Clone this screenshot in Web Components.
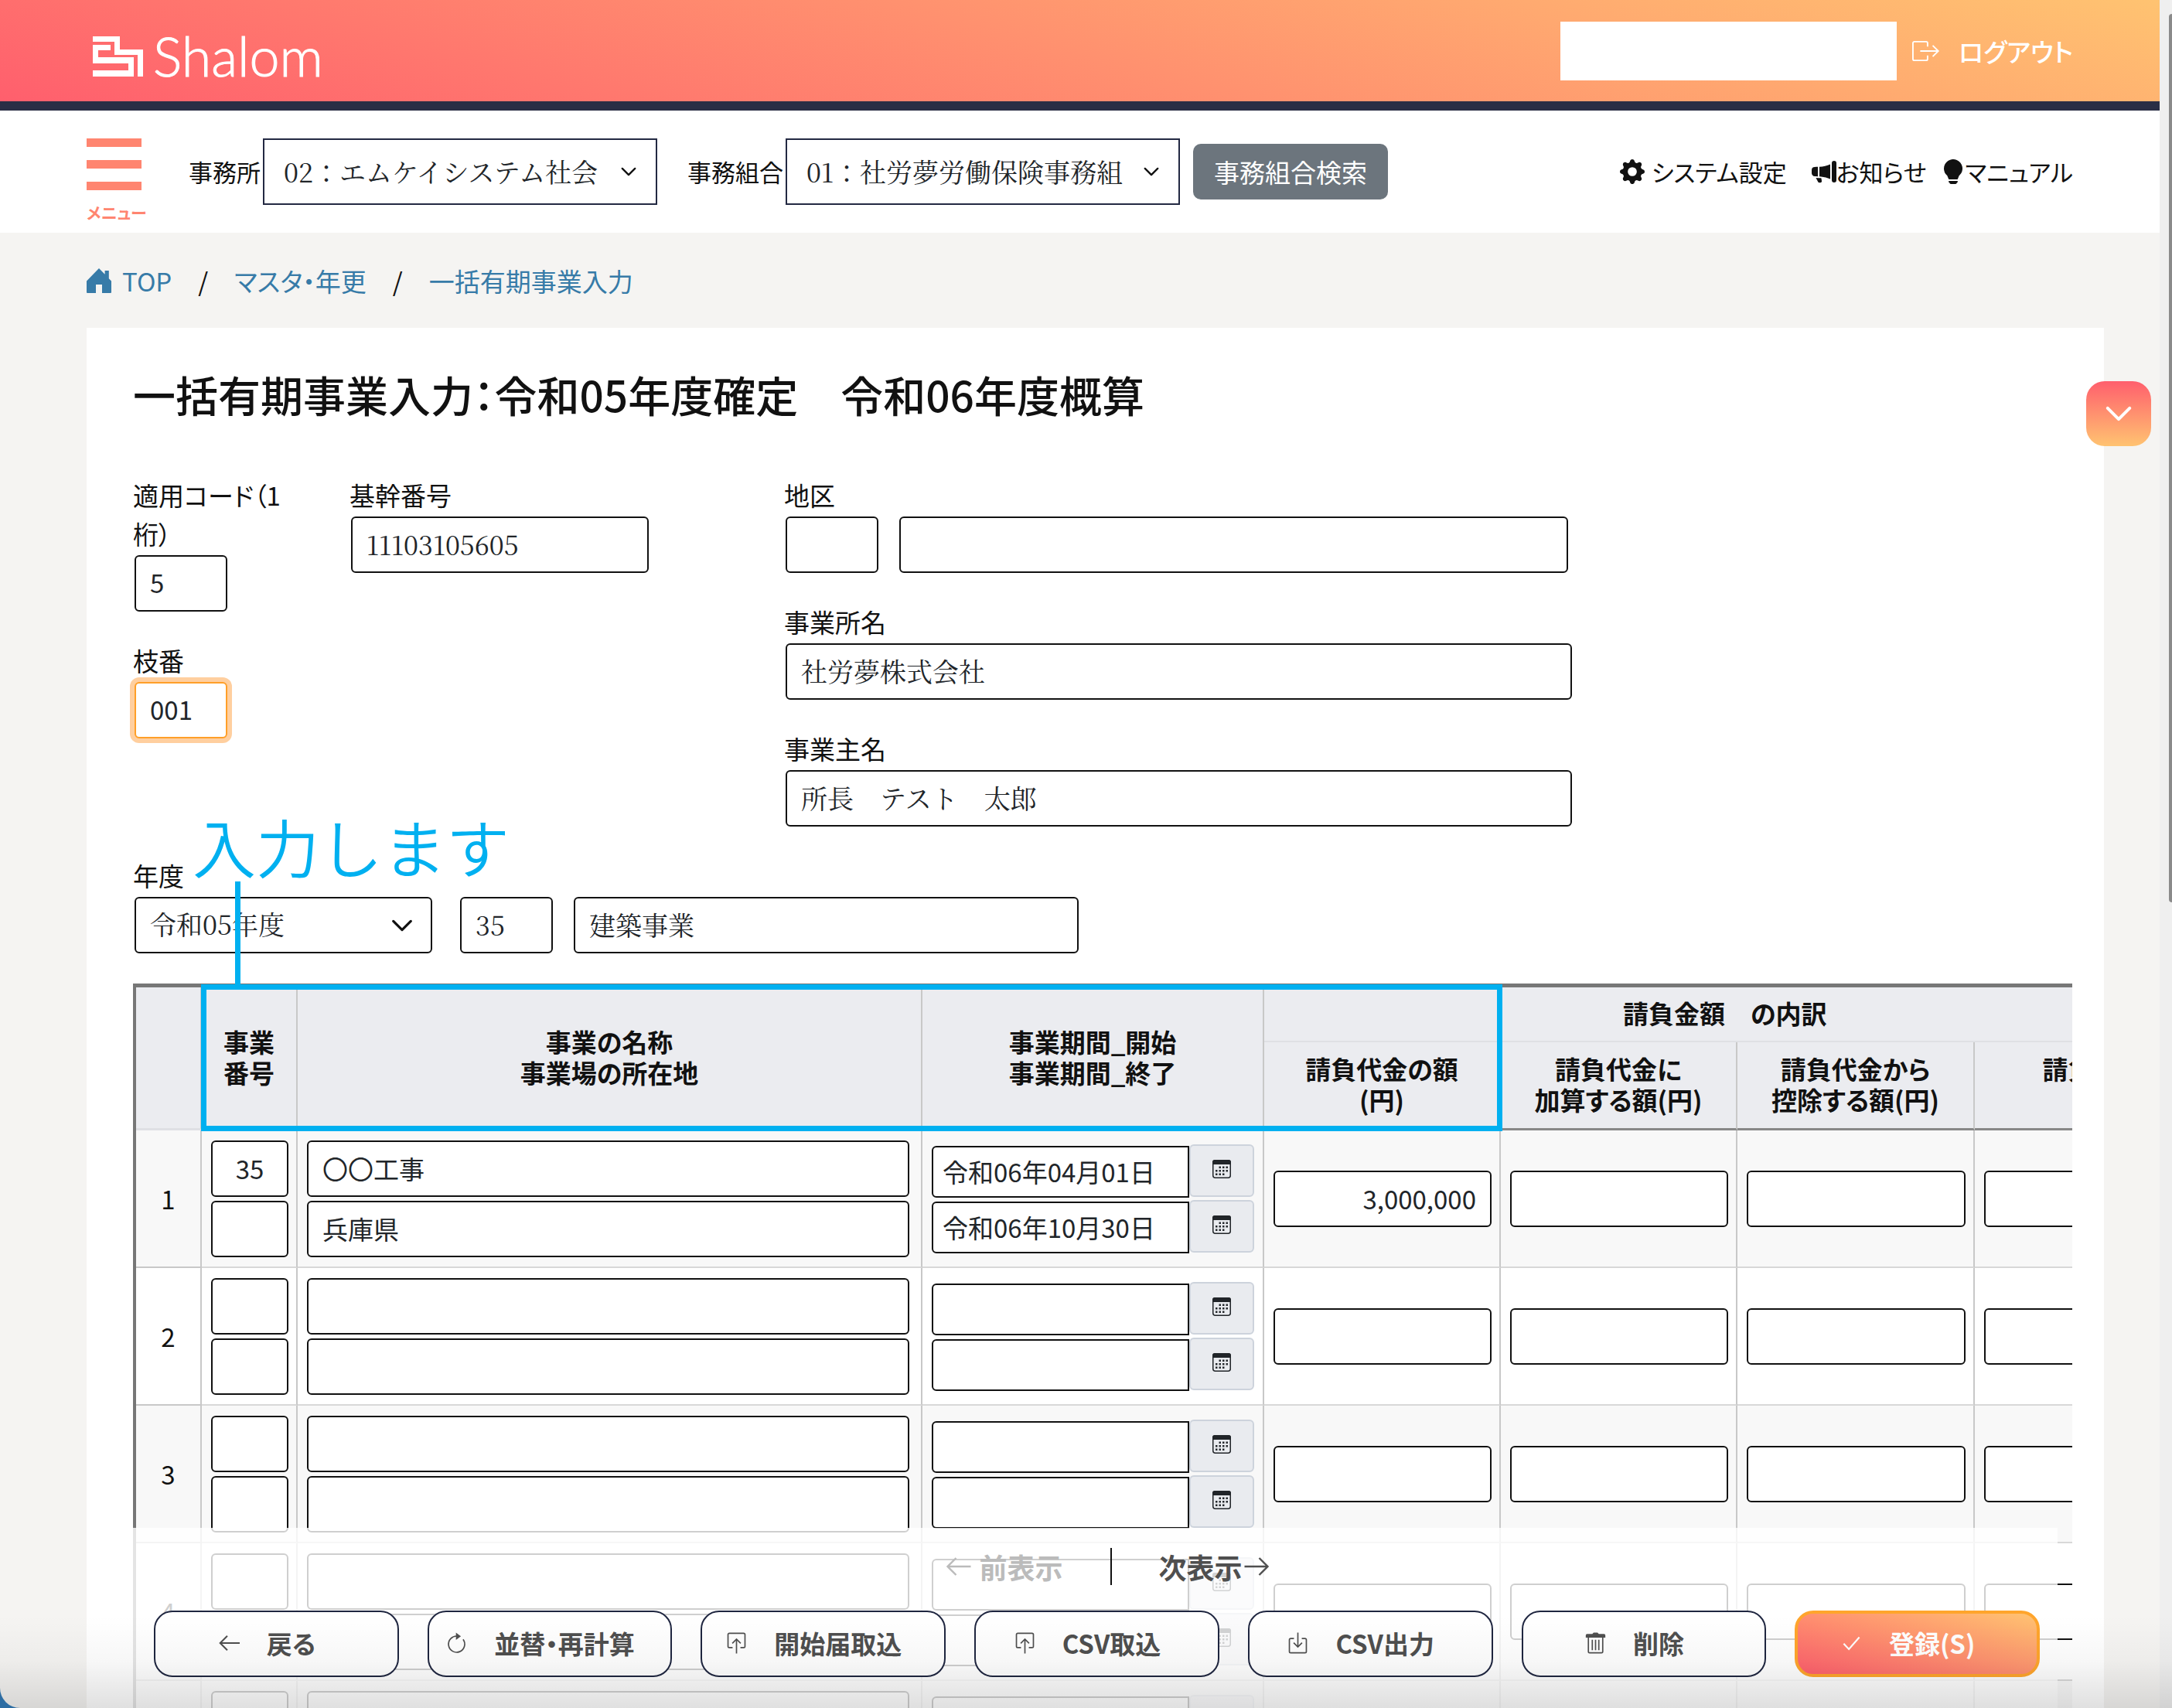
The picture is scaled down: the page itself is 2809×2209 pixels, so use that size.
<!DOCTYPE html>
<html lang="ja">
<head>
    <meta charset="UTF-8">
    <meta name="viewport" content="width=device-width, initial-scale=1.0">
    <title>一括有期事業入力 | Shalom</title>
    <style>
        :root {
            --navy: #2a2e45;
            --ink: #111;
            --coral: #ff8570;
            --link: #377ba8;
            --mark: #00b0f0;
            --warm: linear-gradient(15deg, #ff5f6d, #ffc371);
            --sans: "Noto Sans CJK JP", sans-serif;
            --mincho: "Noto Serif CJK JP", "Noto Sans CJK JP", serif;
        }

        body {
            margin: 0;
            font: 33px/50px var(--sans);
            font-feature-settings: "palt";
            color: var(--ink);
            background: #2d6da3;
        }
    </style>
</head>
<body>
    <app-shell>
        <app-header slot="header"></app-header>
        <nav-bar slot="nav"></nav-bar>
        <bread-crumbs></bread-crumbs>
        <page-card heading="一括有期事業入力：令和05年度確定　令和06年度概算">
            <office-form></office-form>
            <table-area>
                <project-table></project-table>
                <call-out slot="note">入力します</call-out>
            </table-area>
        </page-card>
        <side-toggle slot="side"></side-toggle>
        <action-bar slot="footer"></action-bar>
    </app-shell>

    <script>
        const ICONS = {
            logo: '<path d="M0 0h35v17h30v35h-7V24H28V7H0z"/><path d="M0 11h23v7H7v9h46v25H0v-8h46v-9H0z"/>',
            logout: '<path fill="none" stroke="currentColor" d="M10.5 5V2.6a1 1 0 0 0-1-1h-8a1 1 0 0 0-1 1v10.8a1 1 0 0 0 1 1h8a1 1 0 0 0 1-1V11M5.500 8h12M14 4.200 17.800 8 14 11.800"/>',
            home: '<path d="M8 0 0 8.200V15.500a.5.5 0 0 0 .5.500H6v-5.500h4V16h5.500a.5.500 0 0 0 .5-.5V8.200l-1.600-1.600V1.500h-2.600v2.400z"/>',
            gear: '<path d="M9.405 1.050c-.413-1.400-2.397-1.400-2.810 0l-.1.340a1.464 1.464 0 0 1-2.105.872l-.31-.17c-1.283-.698-2.686.705-1.987 1.987l.169.311c.446.820.023 1.841-.872 2.105l-.34.1c-1.400.413-1.400 2.397 0 2.810l.340.1a1.464 1.464 0 0 1 .872 2.105l-.17.310c-.698 1.283.705 2.686 1.987 1.987l.311-.169a1.464 1.464 0 0 1 2.105.872l.1.340c.413 1.400 2.397 1.400 2.810 0l.1-.34a1.464 1.464 0 0 1 2.105-.872l.310.170c1.283.698 2.686-.705 1.987-1.987l-.169-.311a1.464 1.464 0 0 1 .872-2.105l.340-.1c1.400-.413 1.400-2.397 0-2.810l-.34-.1a1.464 1.464 0 0 1-.872-2.105l.170-.31c.698-1.283-.705-2.686-1.987-1.987l-.311.169a1.464 1.464 0 0 1-2.105-.872zM8 10.930a2.929 2.929 0 1 1 0-5.860 2.929 2.929 0 0 1 0 5.860z"/>',
            megaphone: '<path d="M13 2.500a1.500 1.500 0 0 1 3 0v11a1.500 1.500 0 0 1-3 0zm-1 .724c-2.067.950-4.539 1.481-7 1.656v6.237a25 25 0 0 1 1.088.085c2.053.204 4.038.668 5.912 1.560zm-8 7.841V4.934c-.68.027-1.399.043-2.008.053A2.020 2.020 0 0 0 0 7v2c0 1.106.896 1.996 1.994 2.009l.496.008a64 64 0 0 1 1.510.048zm1.390 1.081c.285.021.569.047.850.078l.253 1.690a1 1 0 0 1-.983 1.187h-.548a1 1 0 0 1-.916-.599l-1.314-2.480a66 66 0 0 1 1.692.064c.327.017.650.037.966.060z"/>',
            bulb: '<path d="M2 6a6 6 0 1 1 10.174 4.310c-.203.196-.359.4-.453.619l-.762 1.769A.5.5 0 0 1 10.500 13h-5a.5.5 0 0 1-.46-.302l-.761-1.770a1.964 1.964 0 0 0-.453-.618A5.984 5.984 0 0 1 2 6zm3 8.500a.5.5 0 0 1 .5-.5h5a.5.5 0 0 1 0 1l-.224.447a1 1 0 0 1-.894.553H6.618a1 1 0 0 1-.894-.553L5.500 15a.5.5 0 0 1-.5-.5z"/>',
            down: '<path fill="none" stroke="currentColor" stroke-width="1.700" stroke-linecap="round" stroke-linejoin="round" d="m2 5 6 6 6-6"/>',
            left: '<path fill="none" stroke="currentColor" stroke-width="1.200" d="M16 8H1M6.500 2.500 1 8l5.500 5.500"/>',
            right: '<path fill="none" stroke="currentColor" stroke-width="1.200" d="M0 8h15M9.500 2.500 15 8l-5.500 5.500"/>',
            reload: '<path fill="none" stroke="currentColor" d="M8.500 2.700A6.200 6.200 0 1 0 13 5.200"/><path d="M7.500 0v5.600L11.300 2.800z"/>',
            upload: '<path fill="none" stroke="currentColor" d="M5 11.500H2.500a1 1 0 0 1-1-1v-9a1 1 0 0 1 1-1h11a1 1 0 0 1 1 1v9a1 1 0 0 1-1 1H11M8 16V5M4.800 8.200 8 5l3.200 3.200"/>',
            download: '<path fill="none" stroke="currentColor" d="M5 4.500H2.500a1 1 0 0 0-1 1v9a1 1 0 0 0 1 1h11a1 1 0 0 0 1-1v-9a1 1 0 0 0-1-1H11M8 0v11M4.800 7.800 8 11l3.200-3.200"/>',
            trash: '<path d="M.5 3.800V2a1 1 0 0 1 1-1H5.500l1-1h3l1 1h4a1 1 0 0 1 1 1v1.800z"/><path fill="none" stroke="currentColor" d="M2.500 3.500v11a1 1 0 0 0 1 1h9a1 1 0 0 0 1-1v-11M5.500 5.500v8M8 5.500v8M10.500 5.500v8"/>',
            check: '<path fill="none" stroke="currentColor" stroke-width="1.300" d="m2 8.500 4 4.200L14 3.500"/>',
            calendar: '<path d="M2 0h12a2 2 0 0 1 2 2v2H0V2a2 2 0 0 1 2-2z"/><rect x=".5" y=".5" width="15" height="15" rx="2" fill="none" stroke="currentColor"/><path stroke="currentColor" stroke-width="1.600" stroke-dasharray="1.600 1.400" d="M5.700 6.500h8M2.700 9.500h11M2.700 12.500h8"/>'
        };

        // Shared look of the text boxes, used inside several shadow roots
        const BOX = `
            input, select {
                box-sizing: border-box;
                height: 73px;
                width: 100%;
                margin: 0;
                padding: 0 18px;
                border: 2px solid #111;
                border-radius: 6px;
                background: #fff;
                color: #212529;
                font: 33px/50px var(--sans);
                outline: none;
            }
        `;

        class BaseElement extends HTMLElement {
            constructor() {
                super();
                this.attachShadow({mode: 'open'});
            }

            connectedCallback() {
                this.shadowRoot.innerHTML = `<style>${this.styles()}</style>${this.render()}`;
            }

            styles() {
                return '';
            }
        }

        class UiIcon extends BaseElement {
            styles() {
                return `
                    :host { display: inline-flex; flex: none; width: 32px; height: 32px; }
                    svg { width: 100%; height: 100%; }
                `;
            }

            render() {
                const box = this.getAttribute('box') || '0 0 16 16';
                return `<svg viewBox="${box}" fill="currentColor" aria-hidden="true">${ICONS[this.getAttribute('name')]}</svg>`;
            }
        }

        class AppShell extends BaseElement {
            styles() {
                return `
                    :host {
                        display: grid;
                        grid-template-columns: 1fr 16px;
                        position: relative;
                        height: 100vh;
                        overflow: hidden;
                        border-radius: 0 0 0 26px;
                        background: #f5f4f2;
                    }
                    .page { min-width: 0; overflow: hidden; }
                    main { padding: 0 72px 0 112px; }
                    .scrollbar {
                        display: flex;
                        justify-content: flex-end;
                        padding-top: 18px;
                        background: #efefef;
                    }
                    .thumb { width: 4px; height: 52vh; border-radius: 4px 0 0 4px; background: #8a8a8a; }
                    .shade {
                        position: absolute;
                        inset: auto 0 0 0;
                        height: 120px;
                        background: linear-gradient(rgba(0, 0, 0, 0), rgba(0, 0, 0, .03) 50%, rgba(0, 0, 0, .12));
                        pointer-events: none;
                    }
                `;
            }

            render() {
                return `
                    <div class="page">
                        <slot name="header"></slot>
                        <slot name="nav"></slot>
                        <main><slot></slot></main>
                    </div>
                    <div class="scrollbar"><div class="thumb"></div></div>
                    <slot name="side"></slot>
                    <slot name="footer"></slot>
                    <div class="shade"></div>
                `;
            }
        }

        class AppHeader extends BaseElement {
            styles() {
                return `
                    :host {
                        display: flex;
                        align-items: center;
                        height: 131px;
                        padding: 0 112px 0 120px;
                        border-bottom: 12px solid var(--navy);
                        background: var(--warm);
                        color: #fff;
                    }
                    .brand { display: flex; align-items: center; gap: 13px; margin-right: auto; padding-top: 14px; }
                    .brand ui-icon { width: 65px; height: 52px; }
                    .brand span { padding-bottom: 2px; font: 300 70px/52px Lato, sans-serif; -webkit-text-stroke: 1px #fff; }
                    .user { width: 435px; height: 76px; background: #fff; }
                    a { display: flex; align-items: center; gap: 24px; margin-left: 20px; color: inherit; font-weight: 500; text-decoration: none; }
                    a ui-icon { width: 36px; height: 32px; }
                `;
            }

            render() {
                return `
                    <div class="brand"><ui-icon name="logo" box="0 0 65 52"></ui-icon><span>Shalom</span></div>
                    <div class="user"></div>
                    <a href="#logout"><ui-icon name="logout" box="0 0 19 16"></ui-icon>ログアウト</a>
                `;
            }
        }

        class NavSelect extends BaseElement {
            styles() {
                return `${BOX}
                    :host { display: flex; align-items: center; gap: 3px; }
                    label { font-size: 31px; white-space: nowrap; }
                    .wrap { display: grid; width: 510px; align-items: center; }
                    .wrap > * { grid-area: 1 / 1; }
                    select {
                        height: 86px;
                        padding: 0 50px 0 25px;
                        border-color: #232942;
                        border-radius: 0;
                        appearance: none;
                        font-family: var(--mincho);
                        font-size: 34px;
                        font-feature-settings: normal;
                    }
                    ui-icon { justify-self: end; width: 22px; height: 22px; margin-right: 26px; pointer-events: none; }
                `;
            }

            render() {
                return `
                    <label for="s">${this.getAttribute('label')}</label>
                    <span class="wrap">
                        <select id="s"><option>${this.getAttribute('value')}</option></select>
                        <ui-icon name="down"></ui-icon>
                    </span>
                `;
            }
        }

        class NavBar extends BaseElement {
            styles() {
                return `
                    :host { display: flex; align-items: center; height: 158px; padding: 0 112px; background: #fff; }
                    button { border: 0; font: inherit; font-feature-settings: inherit; cursor: pointer; }
                    .menu {
                        display: grid;
                        gap: 17px;
                        width: 76px;
                        margin-right: 56px;
                        padding: 20px 0 0;
                        background: none;
                        color: var(--coral);
                        font-size: 21px;
                        font-weight: 700;
                        line-height: 22px;
                        text-align: left;
                        white-space: nowrap;
                    }
                    .menu i { width: 71px; height: 11px; background: var(--coral); }
                    nav-select + nav-select { margin-left: 39px; }
                    .search { height: 72px; margin-left: 17px; padding: 0 27px; border-radius: 10px; background: #6c757d; color: #fff; }
                    nav { display: flex; gap: 18px; margin-left: auto; }
                    a { display: flex; align-items: center; color: var(--ink); font-size: 31px; text-decoration: none; }
                    a:first-child { gap: 9px; margin-right: 14px; }
                `;
            }

            render() {
                return `
                    <button class="menu"><i></i><i></i><i></i>メニュー</button>
                    <nav-select label="事務所" value="02：エムケイシステム社会"></nav-select>
                    <nav-select label="事務組合" value="01：社労夢労働保険事務組"></nav-select>
                    <button class="search">事務組合検索</button>
                    <nav>
                        <a href="#settings"><ui-icon name="gear"></ui-icon>システム設定</a>
                        <a href="#news"><ui-icon name="megaphone"></ui-icon>お知らせ</a>
                        <a href="#manual"><ui-icon name="bulb"></ui-icon>マニュアル</a>
                    </nav>
                `;
            }
        }

        class BreadCrumbs extends BaseElement {
            styles() {
                return `
                    :host { display: flex; align-items: center; gap: 34px; height: 123px; }
                    a { display: flex; align-items: center; gap: 14px; color: var(--link); text-decoration: none; }
                `;
            }

            render() {
                return `
                    <a href="#top"><ui-icon name="home"></ui-icon>TOP</a>
                    <span>/</span>
                    <a href="#master">マスタ・年更</a>
                    <span>/</span>
                    <a href="#input">一括有期事業入力</a>
                `;
            }
        }

        class PageCard extends BaseElement {
            styles() {
                return `
                    :host { display: block; padding: 44px 41px 0 60px; background: #fff; }
                    h1 { margin: 0 0 65px; font-size: 55px; font-weight: 500; line-height: 82px; }
                `;
            }

            render() {
                return `<h1>${this.getAttribute('heading')}</h1><slot></slot>`;
            }
        }

        class FormField extends BaseElement {
            styles() {
                const mincho = this.hasAttribute('mincho');
                return `${BOX}
                    :host { display: block; margin-bottom: 38px; }
                    label { display: block; margin-bottom: 3px; }
                    .row { display: flex; gap: 27px; padding-left: 2px; }
                    input { flex: none; padding-bottom: 3px; ${mincho ? 'font-family: var(--mincho); font-size: 34px; font-feature-settings: normal;' : ''} }
                    input.focus { border-color: #ff9f28; box-shadow: 0 0 0 6px #ffcf9f; }
                `;
            }

            // "widths" and "values" are comma lists: one entry for each box of the field
            render() {
                const widths = this.getAttribute('widths').split(',');
                const values = (this.getAttribute('values') || '').split(',');
                const label = this.getAttribute('label');
                const boxes = widths.map((w, i) => `
                    <input id="f${i}" style="width: ${w}px" value="${values[i] || ''}"
                        ${i ? `aria-label="${label}"` : ''} ${this.hasAttribute('active') ? 'class="focus"' : ''}>
                `).join('');
                return `<label for="f0">${label}</label><div class="row">${boxes}</div>`;
            }
        }

        class OfficeForm extends BaseElement {
            styles() {
                return `${BOX}
                    :host { display: block; }
                    .fields { display: grid; grid-template-columns: 210px 492px 1fr; column-gap: 70px; }
                    .year { display: flex; align-items: flex-end; gap: 27px; margin-bottom: 39px; padding-left: 2px; }
                    .year label { display: block; margin: 0 0 3px -2px; }
                    .pick { display: grid; width: 385px; margin-right: 9px; align-items: center; }
                    .pick > * { grid-area: 1 / 1; }
                    .pick ui-icon { justify-self: end; width: 30px; height: 30px; margin-right: 24px; pointer-events: none; }
                    select { appearance: none; }
                    select, input { padding-bottom: 3px; font-family: var(--mincho); font-size: 34px; font-feature-settings: normal; }
                    .code { width: 120px; }
                    .kind { width: 653px; }
                `;
            }

            render() {
                return `
                    <div class="fields">
                        <div>
                            <form-field label="適用コード（1桁）" widths="120" values="5"></form-field>
                            <form-field label="枝番" widths="120" values="001" active></form-field>
                        </div>
                        <div>
                            <form-field label="基幹番号" widths="385" values="11103105605" mincho></form-field>
                        </div>
                        <div>
                            <form-field label="地区" widths="120,865"></form-field>
                            <form-field label="事業所名" widths="1017" values="社労夢株式会社" mincho></form-field>
                            <form-field label="事業主名" widths="1017" values="所長　テスト　太郎" mincho></form-field>
                        </div>
                    </div>
                    <div class="year">
                        <div>
                            <label for="year">年度</label>
                            <div class="pick">
                                <select id="year"><option>令和05年度</option></select>
                                <ui-icon name="down"></ui-icon>
                            </div>
                        </div>
                        <input class="code" value="35" aria-label="事業コード">
                        <input class="kind" value="建築事業" aria-label="事業の種類">
                    </div>
                `;
            }
        }

        class TableArea extends BaseElement {
            styles() {
                return `
                    :host { display: block; position: relative; }
                    .clip { overflow: hidden; border: solid #777; border-width: 5px 0 0 4px; }
                `;
            }

            render() {
                return '<div class="clip"><slot></slot></div><slot name="note"></slot>';
            }
        }

        class DateInput extends BaseElement {
            styles() {
                return `${BOX}
                    :host { display: flex; height: 69px; width: 417px; }
                    input { align-self: flex-end; width: 333px; height: 67px; padding: 0 12px; border-radius: 6px 0 0 6px; }
                    button {
                        width: 84px;
                        height: 68px;
                        border: 2px solid #cdd3dc;
                        border-radius: 6px;
                        background: #e9ebef;
                        color: #212529;
                    }
                    ui-icon { width: 24px; height: 24px; }
                `;
            }

            render() {
                return `
                    <input value="${this.getAttribute('value') || ''}" aria-label="${this.getAttribute('label')}">
                    <button aria-label="カレンダー"><ui-icon name="calendar"></ui-icon></button>
                `;
            }
        }

        class ProjectTable extends BaseElement {
            styles() {
                return `${BOX}
                    :host { display: block; }
                    table { width: 2687px; table-layout: fixed; border-collapse: separate; border-spacing: 0; }
                    th, td { box-sizing: border-box; padding: 0; border: solid #c8c8c8; border-width: 0 2px 2px 0; }
                    thead th { padding-bottom: 3px; border-bottom: 3px solid #888; background: #ebecf0; font-weight: 700; line-height: 40px; }
                    thead tr:first-child { height: 71px; }
                    thead tr:last-child { height: 114px; }
                    thead .top { border-bottom: 2px solid #dfe0e4; }
                    thead .group { padding-left: 158px; text-align: left; }
                    thead .blank { border-bottom-color: #dfe0e4; }
                    tbody tr { height: 178px; }
                    tbody tr:nth-child(odd) { background: #f8f8f8; }
                    tbody th { font-weight: 400; }
                    tbody td { padding: 0 10px 0 12px; border-bottom-color: #d8d8d8; }
                    tbody td.name { padding-right: 15px; }
                    .stack { display: grid; gap: 5px; }
                    .dates { display: grid; gap: 3px; }
                    .code { padding: 0; text-align: center; }
                    .money { text-align: right; }
                `;
            }

            render() {
                const data = [
                    {code: '35', name: '〇〇工事', place: '兵庫県', from: '令和06年04月01日', to: '令和06年10月30日', price: '3,000,000'},
                    {}, {}, {}, {}
                ];
                const input = (label, value = '', cls = '') => `<input class="${cls}" aria-label="${label}" value="${value}">`;
                const money = (label, value) => `<td>${input(label, value, 'money')}</td>`;
                const rows = data.map((d, i) => `
                    <tr>
                        <th scope="row">${i + 1}</th>
                        <td><div class="stack">${input('事業番号', d.code, 'code')}${input('事業番号2', '', 'code')}</div></td>
                        <td class="name"><div class="stack">${input('事業の名称', d.name)}${input('事業場の所在地', d.place)}</div></td>
                        <td>
                            <div class="dates">
                                <date-input label="事業期間_開始" value="${d.from || ''}"></date-input>
                                <date-input label="事業期間_終了" value="${d.to || ''}"></date-input>
                            </div>
                        </td>
                        ${money('請負代金の額', d.price)}
                        ${money('請負代金に加算する額')}
                        ${money('請負代金から控除する額')}
                        ${money('請負金額')}
                    </tr>
                `).join('');
                return `
                    <table>
                        <colgroup>
                            ${[85, 124, 808, 442, 306, 306, 307, 309].map(w => `<col style="width: ${w}px">`).join('')}
                        </colgroup>
                        <thead>
                            <tr>
                                <th class="blank" rowspan="2"></th>
                                <th rowspan="2">事業<br>番号</th>
                                <th rowspan="2">事業の名称<br>事業場の所在地</th>
                                <th rowspan="2">事業期間_開始<br>事業期間_終了</th>
                                <th class="top"></th>
                                <th class="top group" colspan="3">請負金額　の内訳</th>
                            </tr>
                            <tr>
                                <th>請負代金の額<br>(円)</th>
                                <th>請負代金に<br>加算する額(円)</th>
                                <th>請負代金から<br>控除する額(円)</th>
                                <th>請負金額<br>(円)</th>
                            </tr>
                        </thead>
                        <tbody>${rows}</tbody>
                    </table>
                `;
            }
        }

        // Blue frame over the header cells, with its caption and pointer line
        class CallOut extends BaseElement {
            styles() {
                return `
                    :host {
                        position: absolute;
                        top: 1px;
                        left: 88px;
                        box-sizing: border-box;
                        width: 1683px;
                        height: 190px;
                        border: 7px solid var(--mark);
                        color: var(--mark);
                        pointer-events: none;
                    }
                    .caption {
                        position: absolute;
                        bottom: 100%;
                        left: -18px;
                        font-size: 82px;
                        font-weight: 350;
                        font-feature-settings: normal;
                        line-height: 82px;
                        white-space: nowrap;
                    }
                    .caption::after {
                        content: "";
                        display: block;
                        width: 7px;
                        height: 140px;
                        margin: 5px 0 0 55px;
                        background: var(--mark);
                    }
                `;
            }

            render() {
                return '<div class="caption"><slot></slot></div>';
            }
        }

        class SideToggle extends BaseElement {
            styles() {
                return `
                    :host { position: absolute; top: 493px; right: 27px; }
                    button {
                        display: grid;
                        place-items: center;
                        width: 84px;
                        height: 84px;
                        border: 0;
                        border-radius: 24px;
                        background: linear-gradient(#ff5f6d, #ffc371);
                        color: #fff;
                    }
                    ui-icon { width: 38px; height: 38px; }
                `;
            }

            render() {
                return '<button aria-label="開く"><ui-icon name="down"></ui-icon></button>';
            }
        }

        class ActionButton extends BaseElement {
            styles() {
                return `
                    :host { flex: 1; }
                    button {
                        display: flex;
                        align-items: center;
                        justify-content: center;
                        gap: 35px;
                        width: 100%;
                        height: 86px;
                        padding: 0 24px 3px 0;
                        border: 2px solid #1f2640;
                        border-radius: 24px;
                        background: #fff;
                        color: #4f4f4f;
                        font: 700 33px/50px var(--sans);
                        font-feature-settings: inherit;
                        white-space: nowrap;
                    }
                    :host([primary]) button { border: 4px solid #ffa52c; background: var(--warm); color: #fff; }
                    ui-icon { width: 27px; height: 32px; }
                `;
            }

            render() {
                return `<button><ui-icon name="${this.getAttribute('icon')}"></ui-icon><slot></slot></button>`;
            }
        }

        class ActionBar extends BaseElement {
            styles() {
                return `
                    :host {
                        position: absolute;
                        bottom: 0;
                        left: 172px;
                        right: 148px;
                        box-sizing: border-box;
                        padding: 26px 23px 40px 27px;
                        background: rgba(255, 255, 255, .8);
                    }
                    .pager { display: flex; justify-content: center; align-items: center; gap: 61px; height: 48px; margin-bottom: 33px; padding-left: 28px; }
                    .pager button {
                        display: flex;
                        align-items: center;
                        padding: 0;
                        border: 0;
                        background: none;
                        color: #4f4f4f;
                        font: 700 36px/50px var(--sans);
                    }
                    .pager button:disabled { gap: 8px; color: #bbb; }
                    .pager ui-icon { width: 37px; height: 32px; }
                    .pager i { width: 2px; height: 48px; background: #111; }
                    .actions { display: flex; gap: 37px; }
                `;
            }

            render() {
                return `
                    <div class="pager">
                        <button disabled><ui-icon name="left"></ui-icon>前表示</button>
                        <i></i>
                        <button>次表示<ui-icon name="right"></ui-icon></button>
                    </div>
                    <div class="actions">
                        <action-button icon="left">戻る</action-button>
                        <action-button icon="reload">並替・再計算</action-button>
                        <action-button icon="upload">開始届取込</action-button>
                        <action-button icon="upload">CSV取込</action-button>
                        <action-button icon="download">CSV出力</action-button>
                        <action-button icon="trash">削除</action-button>
                        <action-button icon="check" primary>登録(S)</action-button>
                    </div>
                `;
            }
        }

        customElements.define('ui-icon', UiIcon);
        customElements.define('app-shell', AppShell);
        customElements.define('app-header', AppHeader);
        customElements.define('nav-select', NavSelect);
        customElements.define('nav-bar', NavBar);
        customElements.define('bread-crumbs', BreadCrumbs);
        customElements.define('page-card', PageCard);
        customElements.define('form-field', FormField);
        customElements.define('office-form', OfficeForm);
        customElements.define('table-area', TableArea);
        customElements.define('date-input', DateInput);
        customElements.define('project-table', ProjectTable);
        customElements.define('call-out', CallOut);
        customElements.define('side-toggle', SideToggle);
        customElements.define('action-button', ActionButton);
        customElements.define('action-bar', ActionBar);
    </script>
</body>
</html>
